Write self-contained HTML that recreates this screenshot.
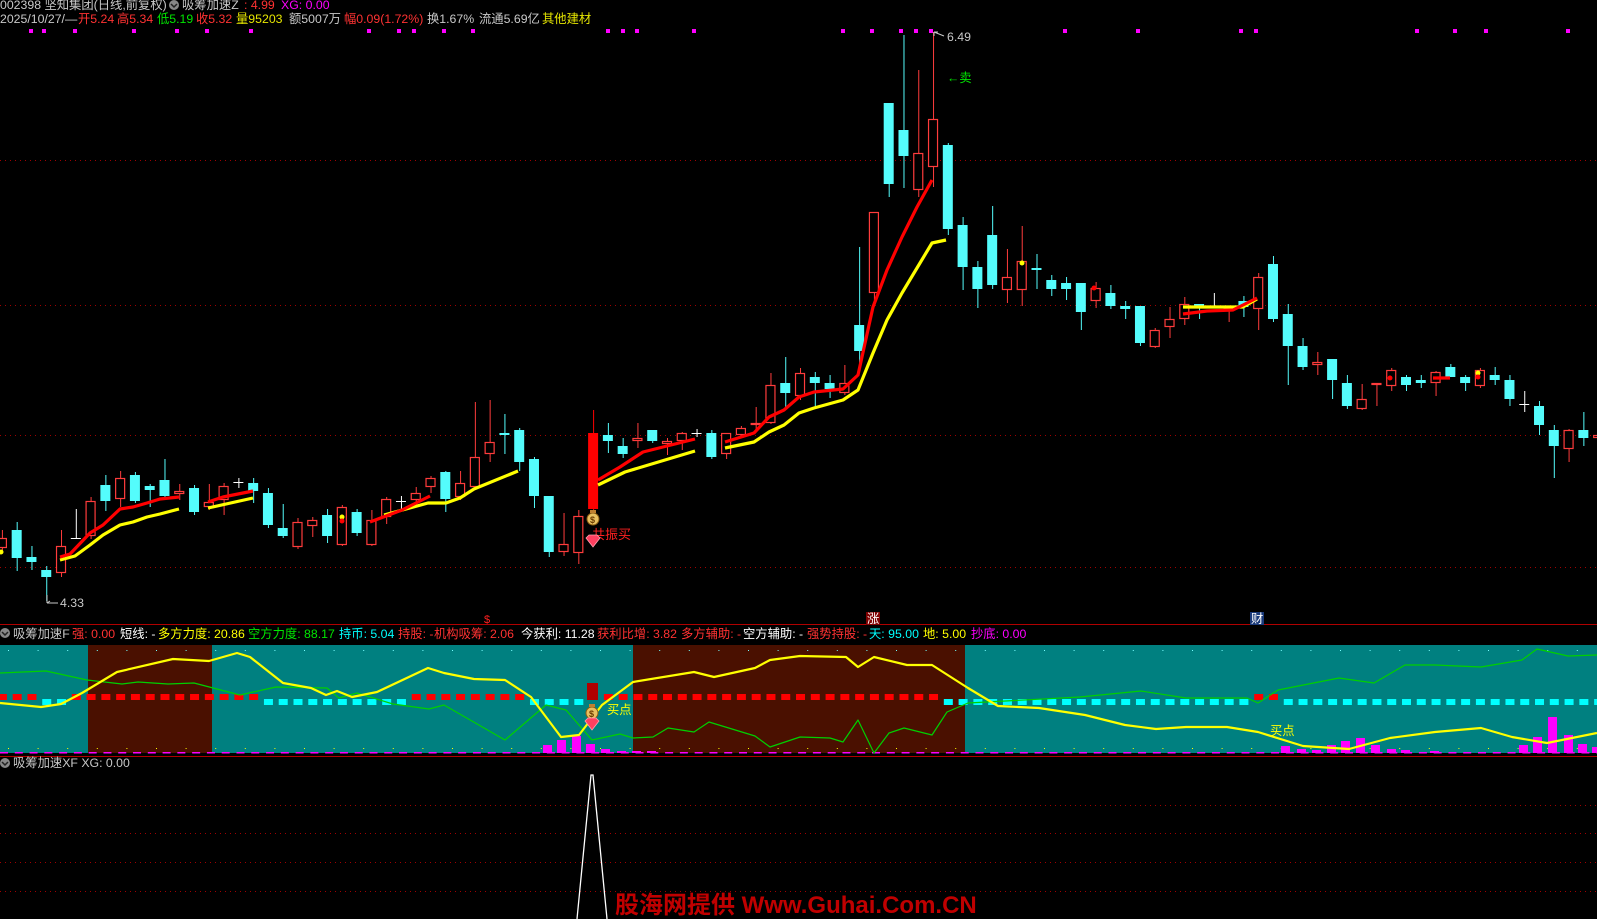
<!DOCTYPE html>
<html><head><meta charset="utf-8">
<style>
html,body{margin:0;padding:0;background:#000;width:1597px;height:919px;overflow:hidden}
#w{position:relative;width:1597px;height:919px}
svg{position:absolute;left:0;top:0}
text{font-family:"Liberation Sans","Noto Sans CJK SC",sans-serif;font-size:12.3px}
</style></head><body><div id="w">
<svg id="s" width="1597" height="919" viewBox="0 0 1597 919" xmlns="http://www.w3.org/2000/svg">
<g stroke="#a00000" stroke-width="1" stroke-dasharray="1 4">
<line x1="0" y1="160.5" x2="1597" y2="160.5"/><line x1="0" y1="305.5" x2="1597" y2="305.5"/>
<line x1="0" y1="435.5" x2="1597" y2="435.5"/><line x1="0" y1="567.5" x2="1597" y2="567.5"/>
<line x1="0" y1="805.5" x2="1597" y2="805.5"/><line x1="0" y1="833.5" x2="1597" y2="833.5"/>
<line x1="0" y1="862.5" x2="1597" y2="862.5"/><line x1="0" y1="891.5" x2="1597" y2="891.5"/>
</g>
<line x1="0" y1="624.5" x2="1597" y2="624.5" stroke="#b00000"/>
<line x1="0" y1="756.5" x2="1597" y2="756.5" stroke="#b00000"/>
<rect x="0" y="645" width="1597" height="108" fill="#008080"/>
<rect x="88" y="645" width="124" height="108" fill="#4a1000"/>
<rect x="633" y="645" width="332" height="108" fill="#4a1000"/>
<g id="cand"></g>
<g id="pan"></g>
<text x="0" y="9" fill="#c8c8c8">002398 坚知集团(日线,前复权)</text>
<circle cx="174" cy="5" r="5" fill="#888"/><path d="M171 4 L174 7 L177 4" stroke="#222" stroke-width="1.5" fill="none"/>
<text x="182" y="9" fill="#c8c8c8">吸筹加速Z</text><text x="244" y="9" fill="#ff3232">: 4.99</text><text x="281" y="9" fill="#ff00ff">XG: 0.00</text>
<text x="0" y="23" fill="#c8c8c8">2025/10/27/—</text>
<text x="78" y="23" fill="#ff3232">开5.24</text><text x="117" y="23" fill="#ff3232">高5.34</text>
<text x="157" y="23" fill="#00e600">低5.19</text><text x="196" y="23" fill="#ff3232">收5.32</text>
<text x="236" y="23" fill="#e6e600">量95203</text><text x="289" y="23" fill="#c8c8c8">额5007万</text>
<text x="344" y="23" fill="#ff3232">幅0.09(1.72%)</text><text x="427" y="23" fill="#c8c8c8">换1.67%</text>
<text x="479" y="23" fill="#c8c8c8">流通5.69亿</text><text x="542" y="23" fill="#e6e600">其他建材</text>
<circle cx="5" cy="633" r="5" fill="#888"/><path d="M2 632 L5 635 L8 632" stroke="#222" stroke-width="1.5" fill="none"/>
<text x="13" y="638" fill="#c8c8c8">吸筹加速F</text>
<text x="72" y="638" fill="#ff3232">强: 0.00</text>
<text x="120" y="638" fill="#fff">短线: -</text>
<text x="158" y="638" fill="#ffff00">多方力度: 20.86</text>
<text x="248" y="638" fill="#00e600">空方力度: 88.17</text>
<text x="339" y="638" fill="#00ffff">持币: 5.04</text>
<text x="398" y="638" fill="#ff3232">持股: -</text>
<text x="434" y="638" fill="#ff3232">机构吸筹: 2.06</text>
<text x="521" y="638" fill="#fff">今获利: 11.28</text>
<text x="597" y="638" fill="#ff3232">获利比增: 3.82</text>
<text x="681" y="638" fill="#ff3232">多方辅助: -</text>
<text x="743" y="638" fill="#fff">空方辅助: -</text>
<text x="807" y="638" fill="#ff3232">强势持股: -</text>
<text x="869" y="638" fill="#00ffff">天: 95.00</text>
<text x="923" y="638" fill="#ffff00">地: 5.00</text>
<text x="971" y="638" fill="#ff00ff">抄底: 0.00</text>
<circle cx="5" cy="763" r="5" fill="#888"/><path d="M2 762 L5 765 L8 762" stroke="#222" stroke-width="1.5" fill="none"/>
<text x="13" y="767" fill="#c8c8c8">吸筹加速XF  XG: 0.00</text>
<path d="M47 603 H58 M47 603 l3 -2 M47 603 v-8" stroke="#c8c8c8" fill="none"/>
<text x="60" y="607" fill="#c8c8c8">4.33</text>
<path d="M934 32 l10 4 M934 32 l0 4 M934 32 l4 0" stroke="#c8c8c8" fill="none"/>
<text x="947" y="41" fill="#c8c8c8">6.49</text>
<text x="947" y="82" fill="#00e600">←卖</text>
<text x="592" y="539" fill="#ff2020" style="font-size:13px">共振买</text>
<text x="484" y="623" fill="#ff2020" style="font-size:11px">$</text>
<rect x="866" y="612" width="14" height="13" fill="#800000"/><text x="867" y="623" fill="#fff">涨</text>
<rect x="1250" y="612" width="14" height="13" fill="#1a3a7a"/><text x="1251" y="623" fill="#fff">财</text>
<text x="607" y="714" fill="#ffff00">买点</text>
<text x="1270" y="735" fill="#ffff00">买点</text>
<g id="icons"></g>
<path d="M577 919 L591 775 L593 775 L607 919" stroke="#fff" stroke-width="1.3" fill="none"/>
<text x="615" y="913" fill="#c00000" style="font-size:24px;font-weight:bold">股海网提供 Www.Guhai.Com.CN</text>
</svg>
<script>
var C=[
['r',538,548,530,552],['c',530,558,522,571],['c',557,562,546,570],['c',570,577,566,601],['r',546,573,530,577],
['w',538,538,509,538],['r',501,536,497,539],['c',485,501,475,511],['r',478,499,471,507],['c',475,501,472,503],
['c',486,490,484,507],['c',480,496,459,500],['r',491,494,484,500],['c',488,512,485,515],['r',502,507,484,510],
['r',486,500,483,515],['w',482,482,478,488],['c',483,491,478,503],['c',493,525,488,528],['c',528,536,504,538],
['r',522,547,518,549],['r',520,526,517,537],['c',515,536,509,543],['r',507,545,505,546],['c',512,533,509,536],
['r',520,545,510,546],['r',499,517,497,524],['w',501,501,496,510],['r',493,500,487,505],['r',478,487,476,493],
['c',472,499,471,512],['r',483,497,471,500],['r',457,487,402,489],['r',442,454,400,462],['c',433,435,414,454],
['c',430,462,428,471],['c',459,496,457,508],['c',496,552,496,557],['r',544,552,513,556],['r',516,553,510,564],
['R',433,509,410,515],['c',435,441,423,453],['c',446,454,438,458],['r',438,441,423,448],['c',430,441,430,443],
['r',441,444,438,455],['r',433,441,432,450],['w',433,433,429,437],['c',433,457,430,459],['r',433,454,433,459],
['r',428,435,426,436],['r',423,425,407,430],['r',385,423,373,424],['c',383,393,357,408],['r',373,396,368,400],
['c',377,383,372,408],['c',383,389,375,398],['r',383,393,365,395],['c',325,351,247,363],['r',212,293,212,300],
['c',103,184,103,197],['c',130,156,35,188],['r',153,190,70,197],['r',119,167,32,187],['c',145,229,143,235],
['c',225,267,217,290],['c',267,289,261,308],['c',235,285,206,289],['r',277,290,249,303],['r',261,290,226,306],
['c',268,269,254,289],['c',280,289,275,296],['c',283,289,277,300],['c',283,312,283,330],['r',288,301,282,308],
['c',293,306,285,309],['c',306,309,301,319],['c',306,343,306,346],['r',330,347,328,348],['r',319,327,307,338],
['r',304,319,297,325],['c',304,307,304,319],['w',307,307,293,307],['r',308,311,306,322],['c',301,307,296,317],
['r',277,309,273,330],['c',264,319,256,322],['c',314,346,304,385],['c',346,367,338,370],['r',362,365,352,375],
['c',359,380,359,399],['c',383,406,375,409],['r',399,409,384,410],['r',383,385,383,406],['r',370,386,368,391],
['c',377,385,375,391],['c',380,383,375,388],['r',372,383,371,396],['c',367,377,364,377],['c',377,383,375,391],
['r',370,386,368,388],['c',375,380,367,385],['c',380,399,375,406],['w',404,404,391,412],['c',406,425,401,435],
['c',430,446,425,478],['r',430,449,429,462],['c',430,438,412,446],['r',435,438,421,448]];
var s='';
function X(i){return 1.9+14.78*i;}
C.forEach(function(c,i){var x=X(i),t=c[0],a=c[1],b=c[2],h=c[3],l=c[4],bw=10;
 var col=(t=='c')?'#54fcfc':(t=='w')?'#fff':(t=='R')?'#ff0000':'#ff3c3c';
 if(t=='w'){s+='<line x1="'+(x-5)+'" y1="'+(a+.5)+'" x2="'+(x+5)+'" y2="'+(a+.5)+'" stroke="#fff"/><line x1="'+(x+.5)+'" y1="'+h+'" x2="'+(x+.5)+'" y2="'+l+'" stroke="#fff"/>';return;}
 if(b-a<2)b=a+2;
 s+='<line x1="'+(x+.5)+'" y1="'+h+'" x2="'+(x+.5)+'" y2="'+a+'" stroke="'+col+'"/><line x1="'+(x+.5)+'" y1="'+b+'" x2="'+(x+.5)+'" y2="'+l+'" stroke="'+col+'"/>';
 if(t=='r')s+='<rect x="'+(x-4.5)+'" y="'+(a+.5)+'" width="'+(bw-1)+'" height="'+(b-a-1)+'" fill="#000" stroke="'+col+'" stroke-width="1.2"/>';
 else s+='<rect x="'+(x-5)+'" y="'+a+'" width="'+bw+'" height="'+(b-a)+'" fill="'+col+'"/>';
});
function pl(p,c,w){return '<polyline points="'+p+'" fill="none" stroke="'+c+'" stroke-width="'+w+'" stroke-linejoin="round"/>';}
var R=['60,557 70,554 90,533 103,525 120,509 133,507 147,503 160,499 179,497','208,502 223,497 253,491','370,522 402,510 430,496','598,480 620,467 643,452 695,439','725,442 754,433 769,417 784,410 799,397 814,392 843,389 858,375 873,307 887,270 902,237 917,207 932,180','1183,314 1207,311 1233,310 1257,298','1433,378 1450,378'];
var Y=['60,560 75,556 90,545 103,535 120,525 133,522 147,517 160,514 179,509','208,508 253,498','384,515 428,503 446,503 460,498 474,489 518,471','598,485 625,472 695,451','725,448 754,442 769,432 784,425 799,413 814,408 843,400 858,390 873,353 887,320 902,293 917,268 932,243 946,240','1183,307 1243,307 1257,299'];
Y.forEach(function(p){s+=pl(p,'#ffff00',3.2);});R.forEach(function(p){s+=pl(p,'#ff0000',3.2);});
s+='<circle cx="342" cy="517" r="2.5" fill="#ffff00"/><circle cx="342" cy="521" r="2.5" fill="#ff0000"/><circle cx="1022" cy="263" r="2.5" fill="#ffff00"/><circle cx="1094" cy="288" r="2.5" fill="#ff0000"/><circle cx="1390" cy="378" r="2.5" fill="#ff0000"/><circle cx="1478" cy="373" r="2.5" fill="#ffff00"/><circle cx="1478" cy="377" r="2.5" fill="#ff0000"/><circle cx="1" cy="552" r="2.5" fill="#ffff00"/>';
[31,44,75,134,177,207,251,369,399,414,444,473,608,623,637,694,843,872,901,916,931,1065,1138,1241,1256,1417,1455,1486,1568].forEach(function(x){s+='<rect x="'+(x-2)+'" y="29" width="4" height="4" fill="#ff00ff"/>';});
document.getElementById('cand').innerHTML=s;
var p='';
for(var x=8;x<1597;x+=29.6){p+='<rect x="'+x+'" y="650" width="1" height="1" fill="#7ff"/><rect x="'+x+'" y="748" width="1" height="1" fill="#ff0"/>';}
for(var x=0;x<1597;x+=14.78){p+='<rect x="'+x+'" y="752" width="8" height="1.5" fill="#ff00ff"/>';}
var segs=[['r',0,2],['c',3,4],['r',5,17],['c',18,27],['r',28,35],['c',36,39],['r',41,63],['c',64,84],['r',85,86],['c',87,108]];
segs.forEach(function(g){for(var i=g[1];i<=g[2];i++){var x=X(i);p+= g[0]=='r'?'<rect x="'+(x-4)+'" y="694" width="9" height="6" fill="#ff0000"/>':'<rect x="'+(x-4)+'" y="699" width="9" height="6" fill="#00ffff"/>';}});
p+='<rect x="587" y="683" width="11" height="17" fill="#b00000"/>';
var mb=[[547,745],[561,740],[576,736],[590,744],[605,749],[621,751],[636,751],[651,751],[1285,746],[1301,749],[1316,750],[1331,745],[1345,741],[1360,738],[1375,745],[1391,749],[1405,750],[1434,751],[1523,745],[1537,737],[1552,717],[1568,735],[1582,744],[1596,747]];
mb.forEach(function(b){p+='<rect x="'+(b[0]-4)+'" y="'+b[1]+'" width="9" height="'+(753-b[1])+'" fill="#ff00ff"/>';});
p+=pl('0,673 46,671 87,680 122,684 138,682 168,684 194,683 240,695 276,687 327,688 339,698 357,693 393,704 429,709 444,705 505,740 546,705 566,710 592,740 620,734 633,738 653,737 668,728 694,732 709,722 755,736 770,747 800,737 830,738 843,742 858,720 874,753 889,733 904,728 932,735 947,712 968,703 1080,697 1141,691 1186,698 1247,698 1258,703 1278,690 1339,678 1374,683 1405,665 1435,665 1481,667 1522,660 1537,649 1568,656 1597,655','#00d000',1.2);
p+=pl('0,703 41,707 61,704 82,693 117,672 173,659 209,661 237,653 250,657 283,683 311,688 326,695 337,691 352,697 377,692 428,668 444,673 474,679 505,680 531,697 561,737 579,735 602,705 633,682 694,672 714,677 755,668 770,660 800,656 846,657 858,667 874,657 907,665 932,665 968,688 998,706 1039,708 1085,715 1125,725 1156,729 1186,727 1227,727 1258,732 1303,746 1349,749 1390,738 1435,732 1481,728 1512,737 1547,743 1597,733','#ffff00',2.2);
document.getElementById('pan').innerHTML=p;
function bag(x,y){return '<ellipse cx="'+x+'" cy="'+(y+2)+'" rx="6" ry="6" fill="#e8c060" stroke="#8a5a10"/><rect x="'+(x-3)+'" y="'+(y-7)+'" width="6" height="3" fill="#c08030"/><text x="'+(x-3)+'" y="'+(y+6)+'" style="font-size:9px;font-weight:bold" fill="#6a3a00">$</text>';}
function dia(x,y){return '<path d="M'+(x-7)+' '+(y-3)+' L'+(x-4)+' '+(y-6)+' L'+(x+4)+' '+(y-6)+' L'+(x+7)+' '+(y-3)+' L'+x+' '+(y+6)+' Z" fill="#ff4060" stroke="#ffa0b0" stroke-width=".8"/>';}
document.getElementById('icons').innerHTML=bag(593,517)+dia(593,541)+bag(592,711)+dia(592,724);
</script>
</div></body></html>
